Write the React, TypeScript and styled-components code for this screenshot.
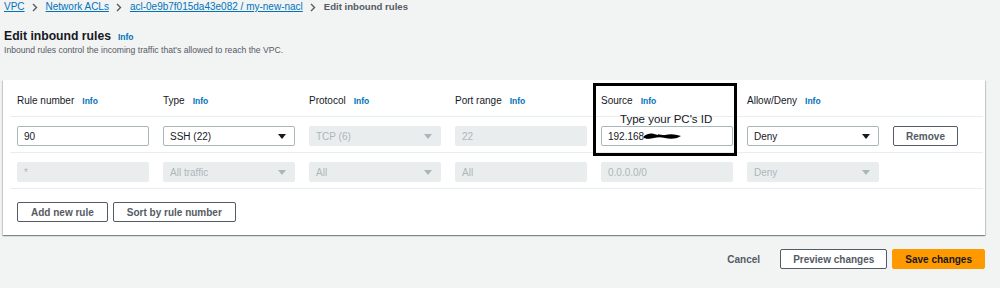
import React from "react";
import styled, { createGlobalStyle } from "styled-components";

const GlobalStyle = createGlobalStyle`
  html, body {
    margin: 0;
    padding: 0;
    background: #f2f3f3;
  }
  body {
    font-family: "Liberation Sans", Arial, sans-serif;
    color: #16191f;
  }
`;

const Page = styled.div`
  width: 1000px;
  height: 288px;
  box-sizing: border-box;
  padding: 0 15px 0 3px;
  background: #f2f3f3;
  overflow: hidden;
`;

const Breadcrumbs = styled.nav`
  display: flex;
  align-items: center;
  height: 14px;
  padding-left: 1px;
  font-size: 10px;
  line-height: 14px;
`;

const Crumb = styled.a`
  color: #0073bb;
  text-decoration: underline;
`;

const CurrentCrumb = styled.span`
  color: #545b64;
  font-weight: bold;
  font-size: 9.6px;
`;

const Chevron = styled.svg`
  margin: 0 8px 0 7px;
  flex: none;
`;

const Header = styled.header`
  padding: 14px 0 0 1px;
`;

const TitleRow = styled.div`
  display: flex;
  align-items: baseline;
  gap: 7px;
  height: 16px;
`;

const Title = styled.h1`
  margin: 0;
  font-size: 12.2px;
  line-height: 16px;
  font-weight: bold;
  color: #16191f;
`;

const InfoLink = styled.a`
  color: #0073bb;
  font-weight: bold;
  font-size: 8.5px;
`;

const Subtitle = styled.p`
  margin: 0;
  font-size: 8.6px;
  line-height: 12px;
  color: #545b64;
`;

const Panel = styled.section`
  position: relative;
  margin-top: 24px;
  background: #fff;
  padding: 0 2px 13px 7px;
  box-shadow: 0 1px 1px 0 rgba(0, 28, 36, 0.3), 1px 1px 1px 0 rgba(0, 28, 36, 0.15),
    -1px 1px 1px 0 rgba(0, 28, 36, 0.15);
`;

const Row = styled.div<{ $head?: boolean }>`
  display: grid;
  grid-template-columns: repeat(6, 132px) 66px;
  column-gap: 14px;
  align-items: center;
  padding: ${(p) => (p.$head ? "14px 7px 8px" : "9px 7px 6px")};
  border-bottom: 1px solid #eaeded;
`;

const Label = styled.div`
  display: flex;
  align-items: baseline;
  gap: 8px;
  font-size: 10px;
  line-height: 14px;
  color: #16191f;
`;

const Field = styled.div<{ $disabled?: boolean }>`
  position: relative;
  display: flex;
  align-items: center;
  justify-content: space-between;
  box-sizing: border-box;
  height: 20px;
  padding: 0 8px 0 6px;
  font-size: 10px;
  border: 1px solid ${(p) => (p.$disabled ? "#eaeded" : "#aab7b8")};
  background: ${(p) => (p.$disabled ? "#eaeded" : "#fff")};
  color: ${(p) => (p.$disabled ? "#aab7b8" : "#16191f")};
  border-radius: 2px;
`;

const Caret = styled.svg`
  flex: none;
`;

const Button = styled.button<{ $primary?: boolean; $plain?: boolean }>`
  box-sizing: border-box;
  height: 20px;
  padding: 0 13px;
  font-family: "Liberation Sans", Arial, sans-serif;
  font-size: 10px;
  font-weight: bold;
  border-radius: 2px;
  cursor: pointer;
  border: 1px solid
    ${(p) => (p.$plain ? "transparent" : p.$primary ? "#ff9900" : "#545b64")};
  background: ${(p) => (p.$primary ? "#ff9900" : p.$plain ? "transparent" : "#fff")};
  color: ${(p) => (p.$primary ? "#16191f" : "#545b64")};
`;

const RemoveButton = styled(Button)`
  width: 65px;
  padding: 0;
`;

const Actions = styled.div`
  display: flex;
  gap: 5px;
  padding: 13px 0 0 7px;
`;

const Footer = styled.div`
  display: flex;
  justify-content: flex-end;
  align-items: center;
  gap: 5px;
  margin-top: 14px;
`;

const FooterButton = styled(Button)`
  padding: 0 12px;
`;

const CancelButton = styled(Button)`
  padding: 0 14px;
`;

const Annotation = styled.div`
  position: absolute;
  left: 590px;
  top: 3px;
  width: 144px;
  height: 73px;
  box-sizing: border-box;
  border: 3px solid #000;
  pointer-events: none;
`;

const AnnotationText = styled.span`
  position: absolute;
  left: 24px;
  top: 26px;
  font-size: 11.5px;
  line-height: 14px;
  color: #16191f;
  white-space: nowrap;
`;

const Redacted = styled.span`
  display: flex;
  align-items: center;
`;

const ChevronIcon = () => (
  <Chevron width="6" height="9" viewBox="0 0 6 9">
    <path d="M1 1l3.5 3.5L1 8" fill="none" stroke="#545b64" strokeWidth="1.4" />
  </Chevron>
);

const CaretIcon = ({ disabled }: { disabled?: boolean }) => (
  <Caret width="8" height="5" viewBox="0 0 8 5">
    <path d="M0 0h8L4 5z" fill={disabled ? "#aab7b8" : "#16191f"} />
  </Caret>
);

const Select = ({ value, disabled }: { value: string; disabled?: boolean }) => (
  <Field $disabled={disabled}>
    <span>{value}</span>
    <CaretIcon disabled={disabled} />
  </Field>
);

const columns = ["Rule number", "Type", "Protocol", "Port range", "Source", "Allow/Deny"];

export default function App() {
  return (
    <Page>
      <GlobalStyle />
      <Breadcrumbs>
        <Crumb>VPC</Crumb>
        <ChevronIcon />
        <Crumb>Network ACLs</Crumb>
        <ChevronIcon />
        <Crumb>acl-0e9b7f015da43e082 / my-new-nacl</Crumb>
        <ChevronIcon />
        <CurrentCrumb>Edit inbound rules</CurrentCrumb>
      </Breadcrumbs>

      <Header>
        <TitleRow>
          <Title>Edit inbound rules</Title>
          <InfoLink>Info</InfoLink>
        </TitleRow>
        <Subtitle>Inbound rules control the incoming traffic that's allowed to reach the VPC.</Subtitle>
      </Header>

      <Panel>
        <Row $head>
          {columns.map((c) => (
            <Label key={c}>
              {c}
              <InfoLink>Info</InfoLink>
            </Label>
          ))}
          <span />
        </Row>

        <Row>
          <Field>90</Field>
          <Select value="SSH (22)" />
          <Select value="TCP (6)" disabled />
          <Field $disabled>22</Field>
          <Field>
            <Redacted>
              192.168
              <svg width="38" height="9" viewBox="0 0 38 9">
                <path
                  d="M0 4c3-2 6-3 10-2s7 2 11 1 8-1 12 0l4 1-4 2c-4 1-8 1-12 0s-7-1-11 0-7 1-10 0z"
                  fill="#000"
                />
                <path d="M2 6l6-1M14 3l6 1" stroke="#000" strokeWidth="1.5" />
              </svg>
            </Redacted>
          </Field>
          <Select value="Deny" />
          <RemoveButton>Remove</RemoveButton>
        </Row>

        <Row>
          <Field $disabled>*</Field>
          <Select value="All traffic" disabled />
          <Select value="All" disabled />
          <Field $disabled>All</Field>
          <Field $disabled>0.0.0.0/0</Field>
          <Select value="Deny" disabled />
          <span />
        </Row>

        <Actions>
          <Button>Add new rule</Button>
          <Button>Sort by rule number</Button>
        </Actions>

        <Annotation>
          <AnnotationText>Type your PC's ID</AnnotationText>
        </Annotation>
      </Panel>

      <Footer>
        <CancelButton $plain>Cancel</CancelButton>
        <FooterButton>Preview changes</FooterButton>
        <FooterButton $primary>Save changes</FooterButton>
      </Footer>
    </Page>
  );
}
